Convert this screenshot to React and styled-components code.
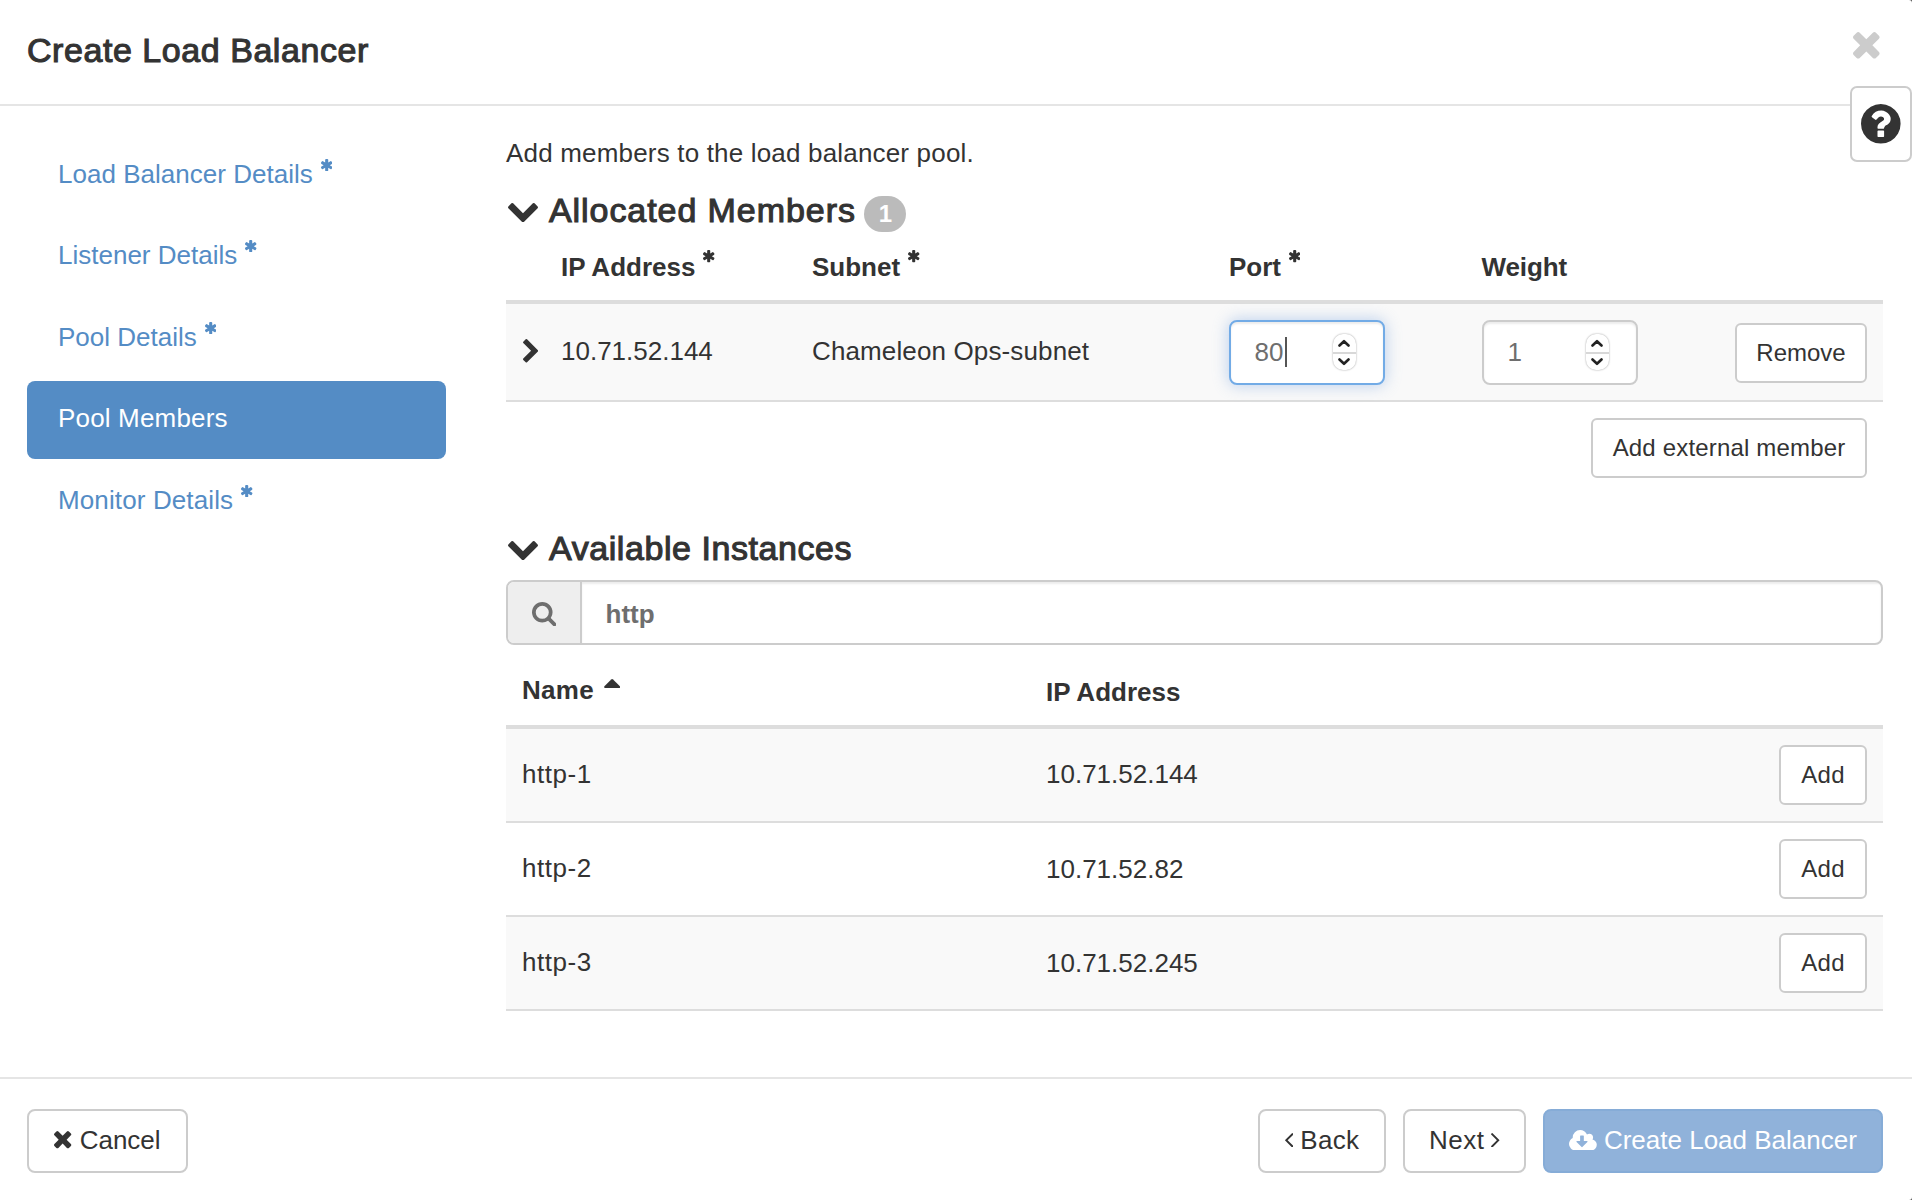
import React from "react";
import styled, { createGlobalStyle, css } from "styled-components";

const GlobalStyle = createGlobalStyle`
  html, body { margin: 0; padding: 0; background: #555; }
  *, *::before, *::after { box-sizing: border-box; }
  body {
    font-family: "Liberation Sans", Arial, sans-serif;
    font-size: 26px;
    line-height: 36px;
    color: #333;
  }
`;

const glyphs = {
  times: ["302 366 1188 1188", "M1490 1322q0 40-28 68l-136 136q-28 28-68 28t-68-28l-294-294-294 294q-28 28-68 28t-68-28l-136-136q-28-28-28-68t28-68l294-294-294-294q-28-28-28-68t28-68l136-136q28-28 68-28t68 28l294 294 294-294q28-28 68-28t68 28l136 136q28 28 28 68t-28 68l-294 294 294 294q28 28 28 68z"],
  asterisk: ["188 128 1416 1536", "M1546 1050q46 26 59.5 77.5t-12.5 97.5l-64 110q-26 46-77.5 59.5t-97.5-12.5l-266-153v307q0 52-38 90t-90 38h-128q-52 0-90-38t-38-90v-307l-266 153q-46 26-97.5 12.5t-77.5-59.5l-64-110q-26-46-12.5-97.5t59.5-77.5l266-154-266-154q-46-26-59.5-77.5t12.5-97.5l64-110q26-46 77.5-59.5t97.5 12.5l266 153v-307q0-52 38-90t90-38h128q52 0 90 38t38 90v307l266-153q46-26 97.5-12.5t77.5 59.5l64 110q26 46 12.5 97.5t-59.5 77.5l-266 154z"],
  chevronDown: ["90 533 1612 1035", "M1683 808l-742 741q-19 19-45 19t-45-19l-742-741q-19-19-19-45.5t19-45.5l166-165q19-19 45-19t45 19l531 531 531-531q19-19 45-19t45 19l166 165q19 19 19 45.5t-19 45.5z"],
  chevronRight: ["346 26 1036 1612", "M1363 877l-742 742q-19 19-45 19t-45-19l-166-166q-19-19-19-45t19-45l531-531-531-531q-19-19-19-45t19-45l166-166q19-19 45-19t45 19l742 742q19 19 19 45t-19 45z"],
  search: ["64 128 1664 1664", "M1216 832q0-185-131.5-316.5t-316.5-131.5-316.5 131.5-131.5 316.5 131.5 316.5 316.5 131.5 316.5-131.5 131.5-316.5zm512 832q0 52-38 90t-90 38q-54 0-90-38l-343-342q-179 124-399 124-143 0-273.5-55.5t-225-150-150-225-55.5-273.5 55.5-273.5 150-225 225-150 273.5-55.5 273.5 55.5 225 150 150 225 55.5 273.5q0 220-124 399l343 343q37 37 37 90z"],
  question: ["128 128 1536 1536", "M1024 1376v-192q0-14-9-23t-23-9h-192q-14 0-23 9t-9 23v192q0 14 9 23t23 9h192q14 0 23-9t9-23zm256-672q0-88-55.5-163t-138.5-116-170-41q-243 0-371 213-15 24 8 42l132 100q7 6 19 6 16 0 25-12 53-68 86-92 34-24 86-24 48 0 85.5 26t37.5 59q0 38-20 61t-68 45q-63 28-115.5 86.5t-52.5 125.5v36q0 14 9 23t23 9h192q14 0 23-9t9-23q0-19 21.5-49.5t54.5-49.5q32-18 49-28.5t46-35 44.5-48 28-60.5 12.5-81zm384 192q0 209-103 385.5t-279.5 279.5-385.5 103-385.5-103-279.5-279.5-103-385.5 103-385.5 279.5-279.5 385.5-103 385.5 103 279.5 279.5 103 385.5z"],
  cloud: ["0 128 1920 1408", "M1280 928q0-14-9-23t-23-9h-224v-352q0-13-9.5-22.5t-22.5-9.5h-192q-13 0-22.5 9.5t-9.5 22.5v352h-224q-13 0-22.5 9.5t-9.5 22.5q0 14 9 23l352 352q9 9 23 9t23-9l351-351q10-12 10-24zm640 224q0 159-112.5 271.5t-271.5 112.5h-1088q-185 0-316.5-131.5t-131.5-316.5q0-130 70-240t188-165q-2-30-2-43 0-212 150-362t362-150q156 0 285.5 87t188.5 231q71-62 166-62 106 0 181 75t75 181q0 76-41 138 130 31 213.5 135.5t83.5 238.5z"],
  angleLeft: ["621 461 582 998", "M1203 544q0 13-10 23l-393 393 393 393q10 10 10 23t-10 23l-50 50q-10 10-23 10t-23-10l-466-466q-10-10-10-23t10-23l466-466q10-10 23-10t23 10l50 50q10 10 10 23z"],
  angleRight: ["589 461 582 998", "M1171 960q0 13-10 23l-466 466q-10 10-23 10t-23-10l-50-50q-10-10-10-23t10-23l393-393-393-393q-10-10-10-23t10-23l50-50q10-10 23-10t23 10l466 466q10 10 10 23z"],
  caretUp: ["0 0 16 9", "M8 0q.5 0 .9.4L15.600 7.300q.8 1.700-.8 1.700H1.200Q-.4 9 .4 7.300L7.100.4Q7.500 0 8 0z"],
};

const Glyph = styled.svg`
  display: block;
  flex: none;
  fill: currentColor;
`;

const Icon = ({ name, w, h, ...rest }) => (
  <Glyph viewBox={glyphs[name][0]} width={w} height={h} preserveAspectRatio="none" aria-hidden="true" {...rest}>
    <path d={glyphs[name][1]} />
  </Glyph>
);

const Modal = styled.div`
  position: relative;
  display: flex;
  flex-direction: column;
  width: 1912px;
  height: 1200px;
  border-radius: 0 3px 3px 0;
  background: #fff;
  overflow: hidden;
`;

const Header = styled.header`
  display: flex;
  justify-content: space-between;
  align-items: flex-start;
  height: 106px;
  padding: 31px 32px 0 27px;
  border-bottom: 2px solid #e5e5e5;
`;

const mediumText = css`
  margin: 0;
  font-size: 34px;
  line-height: 38px;
  font-weight: 400;
  -webkit-text-stroke: 1.1px #333;
  letter-spacing: ${(p) => p.$track || 0.55}px;
  white-space: nowrap;
`;

const Title = styled.h3`
  ${mediumText}
`;

const CloseButton = styled.button`
  border: 0;
  background: none;
  padding: 1px 0 0;
  color: #ccc;
`;

const HelpButton = styled.button`
  position: absolute;
  top: 86px;
  right: 0;
  display: flex;
  align-items: center;
  width: 62px;
  height: 76px;
  padding: 0 0 0 9px;
  border: 2px solid #ccc;
  border-radius: 7px;
  background: #fff;
  color: #333;
`;

const Body = styled.div`
  display: flex;
  height: 971px;
  padding: 0 29px 0 27px;
`;

const Nav = styled.nav`
  display: flex;
  flex-direction: column;
  gap: 4px;
  width: 419px;
  margin-right: 60px;
  padding-top: 30.8px;
`;

const NavItem = styled.a`
  display: flex;
  height: 77.5px;
  padding: 19px 30px 0 31px;
  border-radius: 8px;
  letter-spacing: ${(p) => p.$track || 0}px;
  color: ${(p) => (p.$active ? "#fff" : "#548cc5")};
  background: ${(p) => (p.$active ? "#548cc5" : "transparent")};
  white-space: nowrap;
`;

const Required = styled(Icon)`
  margin: ${(p) => p.$top}px 0 0 8px;
`;

const Main = styled.main`
  width: 1377px;
  padding-top: 29px;
`;

const Intro = styled.p`
  margin: 0 0 20px;
  letter-spacing: 0.18px;
`;

const SectionHead = styled.div`
  display: flex;
  height: 38px;
  padding-left: 2px;
  margin-top: ${(p) => p.$top || 0}px;
`;

const SectionChevron = styled(Icon)`
  margin: 12px 11px 0 0;
`;

const SectionTitle = styled.h4`
  ${mediumText}
`;

const Badge = styled.span`
  width: 42px;
  height: 36px;
  margin: 5px 0 0 8.5px;
  border-radius: 20px;
  background: #bbb;
  color: #fff;
  font-size: 24px;
  font-weight: 700;
  line-height: 35px;
  text-align: center;
`;

const gridFor = {
  members: "55px 251px 417px 253px 1fr",
  instances: "16px 524px 1fr auto",
};

const TableHead = styled.div`
  display: grid;
  grid-template-columns: ${(p) => gridFor[p.$grid]};
  padding: ${(p) => p.$top}px 16px 15px 0;
  border-bottom: 4px solid #ddd;
  font-weight: 700;
`;

const HeadCell = styled.div`
  display: flex;
  height: 36px;
  letter-spacing: ${(p) => p.$track || 0}px;
  margin: ${(p) => p.$shift || 0}px 0 0 ${(p) => p.$left || 0}px;
`;

const SortCaret = styled(Icon)`
  margin: 7px 0 0 10px;
`;

const Row = styled.div`
  display: grid;
  grid-template-columns: ${(p) => gridFor[p.$grid]};
  align-items: start;
  height: ${(p) => p.$h}px;
  padding: 16px 16px 0 0;
  border-bottom: 2px solid #ddd;
  background: ${(p) => (p.$striped ? "#f9f9f9" : "#fff")};
`;

const Cell = styled.div`
  padding-top: ${(p) => p.$top}px;
  letter-spacing: ${(p) => p.$track || 0}px;
  white-space: nowrap;
`;

const ExpandChevron = styled(Icon)`
  margin: 19px 0 0 17px;
`;

const RowEnd = styled.div`
  display: flex;
  align-items: flex-start;
`;

const NumberField = styled.div`
  display: flex;
  width: 156px;
  height: 65px;
  padding: 12px 27.5px 0 23.5px;
  border: 2px solid ${(p) => (p.$focus ? "#72abe6" : "#ccc")};
  border-radius: 8px;
  background: #fff;
  color: #6e6e6e;
  box-shadow: inset 0 2px 2px rgba(0, 0, 0, 0.075)${(p) => (p.$focus ? ", 0 0 16px rgba(102, 150, 220, 0.45)" : "")};
`;

const Caret = styled.span`
  width: 2px;
  height: 30px;
  margin: 3px 0 0 1.5px;
  background: #555;
`;

const Stepper = styled.span`
  display: flex;
  flex-direction: column;
  width: 23px;
  height: 36px;
  margin-left: auto;
  border-radius: 10px;
  background: #fff;
  box-shadow: 0 0 2px rgba(0, 0, 0, 0.4);
`;

const StepHalf = styled.span`
  display: flex;
  align-items: center;
  justify-content: center;
  height: 18px;
  border-top: ${(p) => (p.$lower ? "2px solid #d8d8d8" : "0")};
`;

const StepArrow = ({ down }) => (
  <svg width="12" height="8" viewBox="0 0 12 8" fill="none" stroke="#222" strokeWidth="2.6" strokeLinecap="round" strokeLinejoin="round">
    <path d={down ? "M1.500 1.500 6 5.800l4.500-4.300" : "M1.500 6.500 6 2.200l4.500 4.300"} />
  </svg>
);

const NumberInput = ({ value, focus }) => (
  <NumberField $focus={focus}>
    {value}
    {focus && <Caret />}
    <Stepper>
      <StepHalf><StepArrow /></StepHalf>
      <StepHalf $lower><StepArrow down /></StepHalf>
    </Stepper>
  </NumberField>
);

const Button = styled.button`
  display: flex;
  align-items: center;
  justify-content: center;
  width: ${(p) => p.$w}px;
  height: 64px;
  padding: 0 0 2px;
  border: 2px solid ${(p) => (p.$primary ? "#86acd7" : "#ccc")};
  border-radius: 8px;
  background: ${(p) => (p.$primary ? "#90b2da" : "#fff")};
  color: ${(p) => (p.$primary ? "#fff" : "#333")};
  font: inherit;
  letter-spacing: ${(p) => p.$track || 0}px;
  white-space: nowrap;
`;

const SmallButton = styled(Button)`
  height: 60px;
  padding: 0;
  margin-left: auto;
  border-radius: 6px;
  font-size: 24px;
  margin-top: ${(p) => p.$top || 0}px;
`;

const AddExternal = styled.div`
  display: flex;
  padding: 16px 16px 0 0;
`;

const SearchBox = styled.div`
  display: flex;
  height: 65px;
  margin-top: 13px;
  border: 2px solid #ccc;
  border-radius: 8px;
  background: #fff;
  color: #6e6e6e;
  overflow: hidden;
`;

const SearchAddon = styled.div`
  width: 74px;
  padding: 19.5px 0 0 24px;
  border-right: 2px solid #ccc;
  background: #eee;
`;

const SearchValue = styled.div`
  flex: 1;
  padding: 14px 0 0 23.5px;
  font-weight: 700;
  box-shadow: inset 0 2px 2px rgba(0, 0, 0, 0.075);
`;

const Footer = styled.footer`
  display: flex;
  gap: 17px;
  height: 123px;
  padding: 30px 29px 0 27px;
  border-top: 2px solid #e5e5e5;
`;

const Spacer = styled.div`
  flex: 1;
`;

const LeadIcon = styled(Icon)`
  margin-right: ${(p) => p.$gap}px;
`;

const TrailIcon = styled(Icon)`
  margin-left: 7px;
`;

const Star = ({ top = 1.3 }) => <Required name="asterisk" w={11.4} h={12.3} $top={top} />;

const steps = [
  { label: "Load Balancer Details", required: true, track: 0.02 },
  { label: "Listener Details", required: true },
  { label: "Pool Details", required: true },
  { label: "Pool Members", active: true, track: 0.17 },
  { label: "Monitor Details", required: true, track: 0.12 },
];

const instances = [
  { name: "http-1", ip: "10.71.52.144", ipTop: 11 },
  { name: "http-2", ip: "10.71.52.82", ipTop: 12 },
  { name: "http-3", ip: "10.71.52.245", ipTop: 12 },
];

export default function App() {
  return (
    <>
      <GlobalStyle />
      <Modal>
        <Header>
          <Title>Create Load Balancer</Title>
          <CloseButton aria-label="Close"><Icon name="times" w={26.6} h={26.6} /></CloseButton>
        </Header>
        <HelpButton aria-label="Help"><Icon name="question" w={39.6} h={39.6} /></HelpButton>
        <Body>
          <Nav>
            {steps.map((s) => (
              <NavItem key={s.label} $active={s.active} $track={s.track}>
                {s.label}
                {s.required && <Star top={2.8} />}
              </NavItem>
            ))}
          </Nav>
          <Main>
            <Intro>Add members to the load balancer pool.</Intro>
            <SectionHead>
              <SectionChevron name="chevronDown" w={30} h={19.4} />
              <SectionTitle $track={0.93}>Allocated Members</SectionTitle>
              <Badge>1</Badge>
            </SectionHead>
            <TableHead $grid="members" $top={20}>
              <div />
              <HeadCell>IP Address<Star /></HeadCell>
              <HeadCell>Subnet<Star /></HeadCell>
              <HeadCell>Port<Star /></HeadCell>
              <HeadCell $left={-0.5} $track={-0.1}>Weight</HeadCell>
            </TableHead>
            <Row $grid="members" $h={98} $striped>
              <ExpandChevron name="chevronRight" w={15.2} h={23.6} />
              <Cell $top={13}>10.71.52.144</Cell>
              <Cell $top={13} $track={0.13}>Chameleon Ops-subnet</Cell>
              <NumberInput value="80" focus />
              <RowEnd>
                <NumberInput value="1" />
                <SmallButton $w={132} $top={3}>Remove</SmallButton>
              </RowEnd>
            </Row>
            <AddExternal>
              <SmallButton $w={276} $track={0.17}>Add external member</SmallButton>
            </AddExternal>
            <SectionHead $top={51}>
              <SectionChevron name="chevronDown" w={30} h={19.4} />
              <SectionTitle $track={0.57}>Available Instances</SectionTitle>
            </SectionHead>
            <SearchBox>
              <SearchAddon><Icon name="search" w={24.3} h={24.3} /></SearchAddon>
              <SearchValue>http</SearchValue>
            </SearchBox>
            <TableHead $grid="instances" $top={29}>
              <div />
              <HeadCell $shift={-2} $track={0.3}>Name<SortCaret name="caretUp" w={16.3} h={9} /></HeadCell>
              <HeadCell>IP Address</HeadCell>
            </TableHead>
            {instances.map((it, i) => (
              <Row key={it.name} $grid="instances" $h={94} $striped={i % 2 === 0}>
                <div />
                <Cell $top={11} $track={0.55}>{it.name}</Cell>
                <Cell $top={it.ipTop}>{it.ip}</Cell>
                <SmallButton $w={88} $track={0.3}>Add</SmallButton>
              </Row>
            ))}
          </Main>
        </Body>
        <Footer>
          <Button $w={161}><LeadIcon $gap={8} name="times" w={17.3} h={17.3} />Cancel</Button>
          <Spacer />
          <Button $w={128} $track={0.3}><LeadIcon $gap={7} name="angleLeft" w={8.5} h={14.5} />Back</Button>
          <Button $w={123} $track={0.5}>Next<TrailIcon name="angleRight" w={8.5} h={14.5} /></Button>
          <Button $w={340} $primary disabled><LeadIcon $gap={7} name="cloud" w={27.8} h={20.4} />Create Load Balancer</Button>
        </Footer>
      </Modal>
    </>
  );
}
